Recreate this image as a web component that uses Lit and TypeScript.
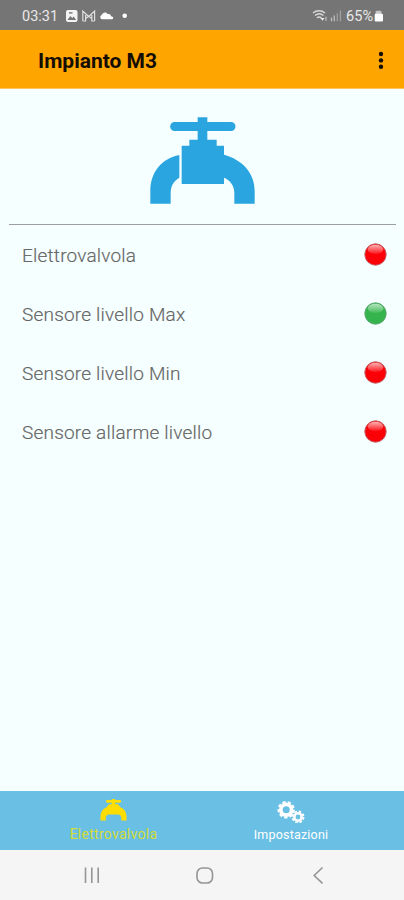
import { LitElement, html, css, svg } from "lit";
import { customElement, property } from "lit/decorators.js";

@customElement("faucet-icon")
class FaucetIcon extends LitElement {
  static styles = css`
    :host { display: block; }
    svg { display: block; width: 100%; height: 100%; }
  `;
  render() {
    return html`<svg viewBox="46 36 315 261" preserveAspectRatio="none" fill="currentColor">
      <path d="M189 37h29v14h71a13 13 0 0 1 0 27h-71v26h28v18h22v27C322 164 360 202 360 258v38h-61v-32c0-22-12-38-31-46v19H141V122h23v-18h25V78h-69a13 13 0 0 1 0-27h69z"/>
      <path d="M134 150v68c-16 9-26 24-26 46v32H47v-38c0-56 34-98 87-108z"/>
    </svg>`;
  }
}

@customElement("tap-icon")
class TapIcon extends LitElement {
  static styles = css`
    :host { display: block; }
    svg { display: block; }
  `;
  render() {
    return html`<svg width="27" height="22" viewBox="0 0 27 22" fill="currentColor">
      <path d="M11.8 0h3.4v.9h4.600a1.400 1.400 0 0 1 0 2.800h-4.600v1.500h2.800l2.400 3c4 1.600 6.100 5 6.100 9.800v3.500h-5.200v-2.500c0-1.800-1-3-2.700-3.500H8.400c-1.700.5-2.700 1.700-2.700 3.500v2.500H.5V18c0-4.800 2.100-8.200 6.100-9.800l2.400-3h2.800V3.700H7.200a1.400 1.400 0 0 1 0-2.800h4.600z"/>
    </svg>`;
  }
}

@customElement("status-light")
class StatusLight extends LitElement {
  @property({ reflect: true }) tone = "red";
  static styles = css`
    :host { display: block; width: 23px; height: 23px; --fill: #fb0007; --rim: #c0656c; --gloss: #ffb0b0; }
    :host([tone="green"]) { --fill: #35b44e; --rim: #5fa873; --gloss: #b4e6bd; }
    svg { display: block; }
    .ball { fill: var(--fill); stroke: var(--rim); }
    .top { stop-color: var(--gloss); }
    .low { stop-color: var(--gloss); stop-opacity: 0.12; }
  `;
  render() {
    return html`<svg width="23" height="23" viewBox="0 0 23 23">
      <defs><linearGradient id="g" x1="0" y1="0" x2="0" y2="1">
        <stop class="top" offset="0"/><stop class="low" offset="1"/>
      </linearGradient></defs>
      <circle class="ball" cx="11.5" cy="11.5" r="10.7" stroke-width="1"/>
      <ellipse cx="11.5" cy="6.4" rx="7.8" ry="4.6" fill="url(#g)"/>
    </svg>`;
  }
}

const gear = (x: number, y: number, ring: number, width: number, teeth: number) => {
  const r = ring + width / 2 + 0.6;
  const step = (2 * Math.PI * r) / teeth;
  return svg`<g fill="none" stroke="#fff">
    <circle cx=${x} cy=${y} r=${ring} stroke-width=${width}/>
    <circle cx=${x} cy=${y} r=${r} stroke-width="1.7" stroke-dasharray="${step * 0.6} ${step * 0.4}"/>
  </g>`;
};

@customElement("app-root")
class AppRoot extends LitElement {
  static styles = css`
    :host { display: flex; flex-direction: column; width: 404px; height: 900px; overflow: hidden;
      background: #f5ffff; font-family: Roboto, "Liberation Sans", sans-serif; }
    svg { display: block; }
    .status { height: 30px; box-sizing: border-box; background: #757575; color: #e9e9e9; display: flex;
      align-items: center; padding: 2px 20px 0 22px; font-size: 14.5px; }
    .time { width: 43px; }
    .spacer { flex: 1; }
    .bar { height: 59px; box-sizing: border-box; background: #ffa500; display: flex; align-items: center;
      justify-content: space-between; padding: 1px 19px 0 38px; border-bottom: 1px solid #ffc45a; }
    .title { margin: 0; font-size: 21px; font-weight: 700; color: #130d04; line-height: 28px; padding-top: 2px; }
    main { flex: 1; }
    .hero { margin: 0 8px 0 9px; height: 136px; box-sizing: border-box; border-bottom: 1.5px solid #9b9f9f; padding: 28px 0 0 141px; }
    .hero faucet-icon { width: 105px; height: 87px; color: #2ba5e0; }
    .row { height: 59px; display: flex; align-items: center; justify-content: space-between; padding: 0 17px 0 22px; }
    .label { font-size: 19px; font-weight: 300; color: #5c5c5c; -webkit-text-stroke: 0.2px #808080; letter-spacing: 0.2px; padding-top: 2px; }
    .tabs { height: 59px; background: #6abfe4; display: flex; color: #fff; }
    .tab { display: flex; flex-direction: column; align-items: center; box-sizing: border-box; padding-top: 8px; }
    .tab.first { width: 227px; color: #ffdd00; }
    .tab.second { width: 128px; }
    .icon { height: 26px; }
    .first .name { font-size: 14px; line-height: 18px; letter-spacing: 0.28px; color: #d3dc38; }
    .second .name { font-size: 12.5px; line-height: 20px; letter-spacing: 0.2px; }
    .system { height: 50px; background: #f5f5f5; }
  `;
  render() {
    const rows = [
      ["Elettrovalvola", "red"],
      ["Sensore livello Max", "green"],
      ["Sensore livello Min", "red"],
      ["Sensore allarme livello", "red"],
    ];
    return html`
      <div class="status">
        <span class="time">03:31</span>
        <svg width="66" height="16" viewBox="65 7 66 16">
          <rect x="66" y="9" width="11.5" height="12" rx="2" fill="#f4f4f4"/>
          <path d="M67.5 19l2.800-4 2 2 1.400-1.500 2.400 3.500z" fill="#757575"/>
          <rect x="69" y="11.2" width="3.5" height="1.4" fill="#757575"/>
          <path d="M82.800 20v-9.800l5.900 5.200 5.900-5.200v9.800M82.800 20h2.800v-7.200M94.600 20h-2.800v-7.200M85.600 17.500l3.100-2.300 3.100 2.300" fill="none" stroke="#dedede" stroke-width="1.2"/>
          <path d="M101.800 18.300a2.200 2.200 0 0 1-.1-4.200c.7-2.600 4.400-4 6-1 1.800-.6 3 .3 3.300 2.100 2.800.2 2.800 3.100.4 3.100z" fill="#fff"/>
          <circle cx="124.7" cy="14.8" r="2.3" fill="#fff"/>
        </svg>
        <span class="spacer"></span>
        <svg width="34" height="16" viewBox="310 7 34 16">
          <g fill="none" stroke="#d8d8d8" stroke-width="1.5">
            <path d="M311 12c3.500-3 8.500-3 12 0M313 14.500c2.500-2 6-2 8.500 0M315 16.900c1.300-1 3-1 4.400 0"/>
          </g>
          <path d="M318.500 17l2 2.700 2-2.700z" fill="#eee"/>
          <path d="M324 15.700v4M329.500 16.500v3.800M332.300 14.500v5.800" stroke="#bebebe" stroke-width="1.3"/>
          <path d="M335.300 12.300v8M338.400 9.500v10.800" stroke="#a0a0a0" stroke-width="1.3"/>
        </svg>
        <span>65%</span>
        <svg width="11" height="16" viewBox="373 7 11 16">
          <path d="M375.500 13.500v-2.500q0-1.300 1.500-1.300h3q1.500 0 1.500 1.300V13.500" fill="#c6c6c6"/>
          <rect x="374.7" y="12.7" width="8.3" height="7.8" rx="1.2" fill="#fff"/>
        </svg>
      </div>
      <header class="bar">
        <h1 class="title">Impianto M3</h1>
        <svg width="8" height="20" viewBox="0 0 8 20" fill="#130d04">
          <circle cx="4" cy="4" r="2.2"/><circle cx="4" cy="10.4" r="2.2"/><circle cx="4" cy="16.8" r="2.2"/>
        </svg>
      </header>
      <main>
        <div class="hero"><faucet-icon></faucet-icon></div>
        ${rows.map(([label, tone]) => html`<div class="row"><span class="label">${label}</span><status-light tone=${tone}></status-light></div>`)}
      </main>
      <nav class="tabs">
        <div class="tab first"><div class="icon"><tap-icon></tap-icon></div><span class="name">Elettrovalvola</span></div>
        <div class="tab second"><div class="icon">
          <svg width="28" height="24" viewBox="277 798.5 28 24">${gear(286.2, 809.3, 5.4, 3.7, 9)}${gear(298, 816.5, 3.7, 2.6, 8)}</svg>
        </div><span class="name">Impostazioni</span></div>
      </nav>
      <div class="system">
        <svg width="404" height="50" viewBox="0 850 404 50" fill="none" stroke="#959595" stroke-width="1.6">
          <path d="M85.5 867.5v15.500M91.800 867.500v15.500M98.200 867.500v15.500"/>
          <rect x="197" y="868" width="15.5" height="15" rx="5.5"/>
          <path d="M322.500 867.500l-8.300 8 8.300 7.800"/>
        </svg>
      </div>`;
  }
}
